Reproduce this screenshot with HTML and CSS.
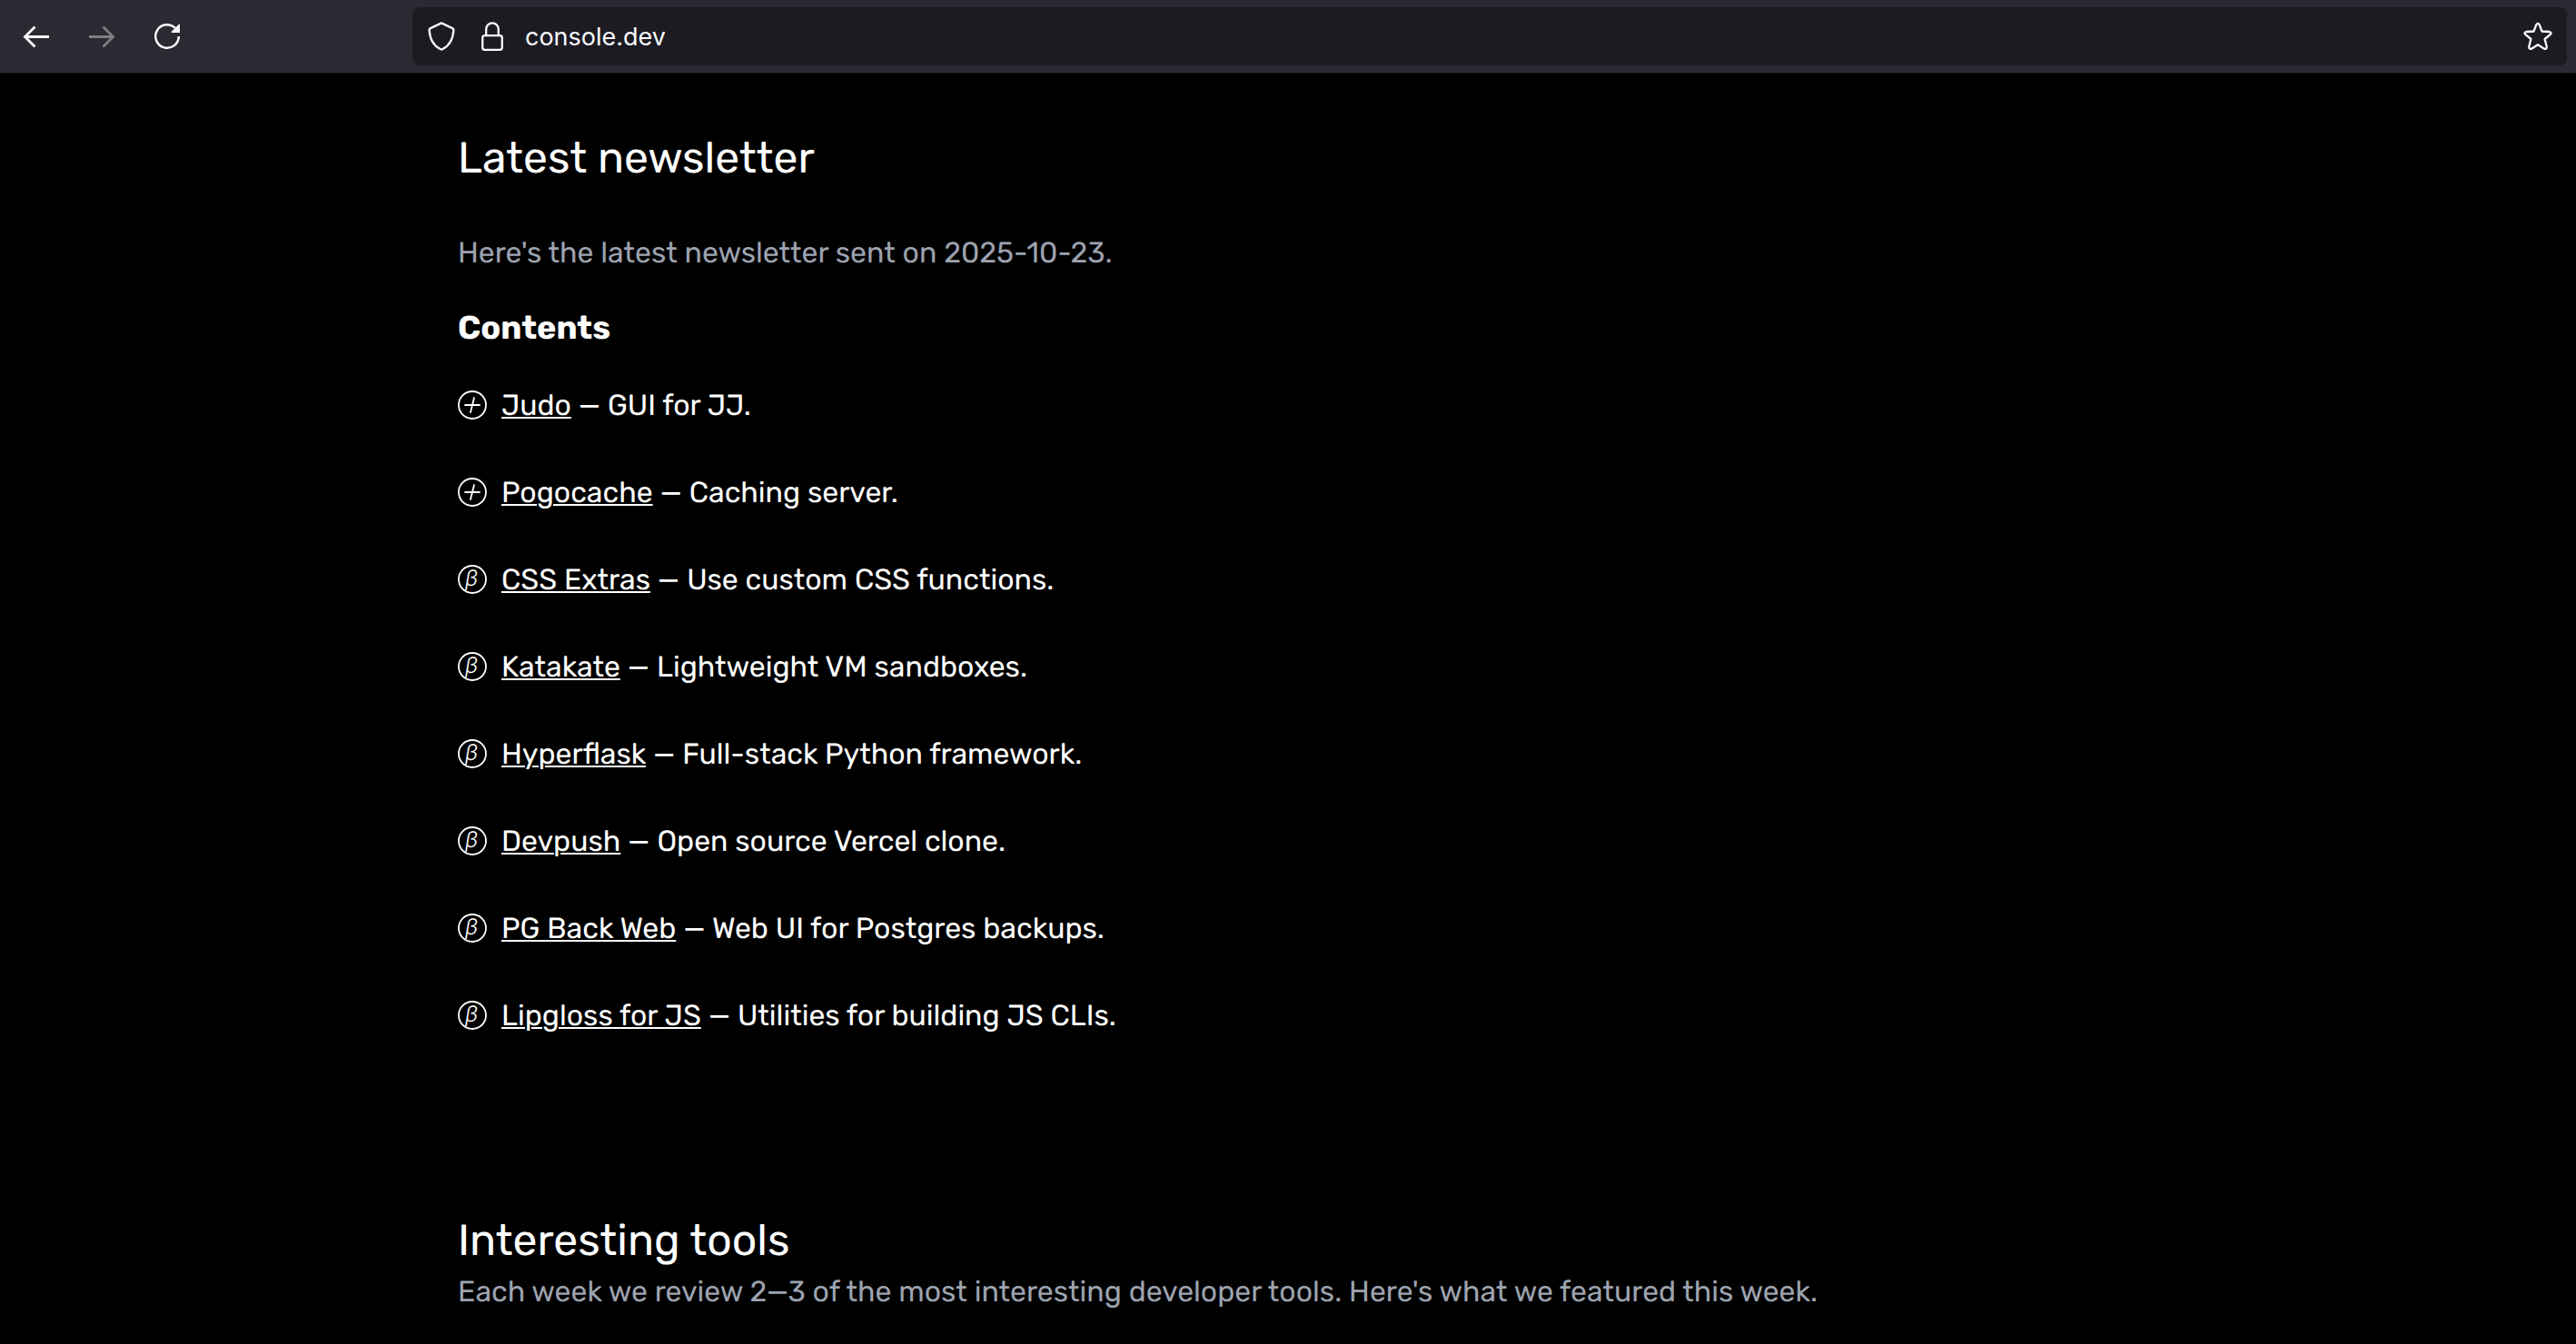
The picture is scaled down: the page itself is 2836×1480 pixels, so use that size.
FILE: index.html
```html
<!DOCTYPE html>
<html lang="en">
<head>
<meta charset="utf-8">
<title>Console</title>
<link rel="stylesheet" href="styles.css">
</head>
<body>
<svg class="sprite" aria-hidden="true">
  <symbol id="plus" viewBox="0 0 32 32">
    <circle cx="16" cy="16" r="15" fill="none" stroke="currentColor" stroke-width="1.8"/>
    <path d="M8 16H24M18 8L14 24" fill="none" stroke="currentColor" stroke-width="1.8" stroke-linecap="round"/>
  </symbol>
  <symbol id="beta" viewBox="0 0 32 32">
    <circle cx="16" cy="16" r="15" fill="none" stroke="currentColor" stroke-width="1.8"/>
    <text class="beta-letter" x="15" y="23" text-anchor="middle">β</text>
  </symbol>
</svg>

<header class="toolbar">
  <nav class="nav-buttons" aria-label="History">
    <button class="tool-button" type="button" aria-label="Back">
      <svg class="tool-icon" viewBox="0 0 32 32"><path d="M30 16.5H4M14.5 5.5L3.5 16.5L14.5 27.5" fill="none" stroke="currentColor" stroke-width="2.8"/></svg>
    </button>
    <button class="tool-button" type="button" aria-label="Forward" disabled>
      <svg class="tool-icon" viewBox="0 0 32 32"><path d="M2 16.5H28M17.5 5.5L28.5 16.5L17.5 27.5" fill="none" stroke="currentColor" stroke-width="2.8"/></svg>
    </button>
    <button class="tool-button" type="button" aria-label="Reload">
      <svg class="tool-icon" viewBox="0 0 32 32"><path d="M28.8 16A12.8 12.8 0 1 1 24.8 6.7" fill="none" stroke="currentColor" stroke-width="2.5"/><path d="M30 3.2V12H21.2Q20 12 20.6 11L28.6 3Q30 2 30 3.2Z" fill="currentColor"/></svg>
    </button>
  </nav>
  <form class="address">
    <button class="address-button" type="button" aria-label="Tracking protection">
      <svg class="tool-icon" viewBox="0 0 32 32"><path d="M16 1.4L28.6 7.4Q29.5 7.9 29.4 9C28.8 19 24.5 26.5 17 30.2Q16 30.7 15 30.2C7.5 26.5 3.2 19 2.6 9Q2.5 7.9 3.4 7.4Z" fill="none" stroke="currentColor" stroke-width="2.3" stroke-linejoin="round"/></svg>
    </button>
    <button class="address-button" type="button" aria-label="Connection security">
      <svg class="tool-icon" viewBox="0 0 32 32"><rect x="5.2" y="15.2" width="21.6" height="15.6" rx="2.5" fill="none" stroke="currentColor" stroke-width="2.3"/><path d="M9.2 15V8.2A6.8 6.8 0 0 1 22.8 8.2V15" fill="none" stroke="currentColor" stroke-width="2.3"/></svg>
    </button>
    <input class="address-input" type="text" value="console.dev" aria-label="Address">
    <button class="address-button" type="button" aria-label="Bookmark">
      <svg class="tool-icon" viewBox="0 0 32 32"><path d="M14.3 3.2Q16 .6 17.7 3.2L20.5 10.5L28.8 11Q31.6 11.7 29.8 13.8L23.6 19L25.7 27.3Q26 30.5 23 29.7L16 25.2L9 29.7Q6 30.5 6.3 27.3L8.4 19L2.2 13.8Q.4 11.7 3.2 11L11.5 10.5Z" fill="none" stroke="currentColor" stroke-width="2.3" stroke-linejoin="round"/></svg>
    </button>
  </form>
</header>

<main class="page">
  <section class="newsletter">
    <h2 class="title">Latest newsletter</h2>
    <p class="lead">Here's the latest newsletter sent on 2025-10-23.</p>
    <h3 class="subtitle">Contents</h3>
    <ul class="contents">
      <li class="entry"><svg class="entry-icon"><use href="#plus"/></svg><span><a href="#judo">Judo</a> — GUI for JJ.</span></li>
      <li class="entry"><svg class="entry-icon"><use href="#plus"/></svg><span><a href="#pogocache">Pogocache</a> — Caching server.</span></li>
      <li class="entry"><svg class="entry-icon"><use href="#beta"/></svg><span><a href="#css-extras">CSS Extras</a> — Use custom CSS functions.</span></li>
      <li class="entry"><svg class="entry-icon"><use href="#beta"/></svg><span><a href="#katakate">Katakate</a> — Lightweight VM sandboxes.</span></li>
      <li class="entry"><svg class="entry-icon"><use href="#beta"/></svg><span><a href="#hyperflask">Hyperflask</a> — Full-stack Python framework.</span></li>
      <li class="entry"><svg class="entry-icon"><use href="#beta"/></svg><span><a href="#devpush">Devpush</a> — Open source Vercel clone.</span></li>
      <li class="entry"><svg class="entry-icon"><use href="#beta"/></svg><span><a href="#pg-back-web">PG Back Web</a> — Web UI for Postgres backups.</span></li>
      <li class="entry"><svg class="entry-icon"><use href="#beta"/></svg><span><a href="#lipgloss">Lipgloss for JS</a> — Utilities for building JS CLIs.</span></li>
    </ul>
  </section>
  <section class="tools">
    <h2 class="title">Interesting tools</h2>
    <p class="lead">Each week we review 2—3 of the most interesting developer tools. Here's what we featured this week.</p>
  </section>
</main>
</body>
</html>
```
FILE: styles.css
```css
* {
  box-sizing: border-box;
  margin: 0;
  padding: 0;
}

body {
  background: #000;
  color: #fff;
  font-family: Rubik, Inter, "Liberation Sans", sans-serif;
  font-size: 32px;
  font-weight: 400;
  line-height: 48px;
  text-rendering: geometricPrecision;
}

.sprite {
  display: none;
}

.toolbar {
  display: flex;
  align-items: center;
  gap: 238px;
  padding: 8px 10px 8px 8px;
  border-bottom: 1px solid #0c0c0d;
  background: #2b2a33;
  color: #fbfbfe;
}

.nav-buttons {
  display: flex;
  gap: 8px;
}

.tool-button,
.address-button {
  display: grid;
  place-items: center;
  height: 64px;
  border: 0;
  background: none;
  color: inherit;
}

.tool-button {
  width: 64px;
}

.tool-button:disabled {
  opacity: 0.4;
}

.tool-icon {
  display: block;
  width: 32px;
  height: 32px;
}

.address {
  display: flex;
  flex: 1;
  align-items: center;
  padding: 0 4px;
  border-radius: 8px;
  background: #1c1b22;
}

.address-button {
  width: 56px;
}

.address-input {
  flex: 1;
  min-width: 0;
  height: 64px;
  padding: 0 8px;
  border: 0;
  outline: 0;
  background: none;
  color: inherit;
  font: 400 27px/32px Inter, "Liberation Sans", sans-serif;
}

.page {
  max-width: 1828px;
  margin: 0 auto;
  padding-top: 61px;
}

.title {
  font-size: 48px;
  font-weight: 400;
  line-height: 64px;
}

.lead {
  color: #9ca3af;
}

.newsletter .lead {
  margin-top: 48px;
}

.subtitle {
  margin-top: 39px;
  font-size: 36px;
  font-weight: 700;
  line-height: 40px;
}

.contents {
  display: flex;
  flex-direction: column;
  gap: 48px;
  margin-top: 41px;
  list-style: none;
}

.entry {
  display: flex;
  align-items: center;
  gap: 16px;
}

.entry a {
  color: inherit;
  text-decoration-thickness: 2px;
  text-underline-offset: 2px;
}

.entry-icon {
  flex: none;
  width: 32px;
  height: 32px;
}

.beta-letter {
  fill: currentColor;
  font: italic 300 24px Inter, "Open Sans", sans-serif;
}

.tools {
  margin-top: 192px;
}
```
